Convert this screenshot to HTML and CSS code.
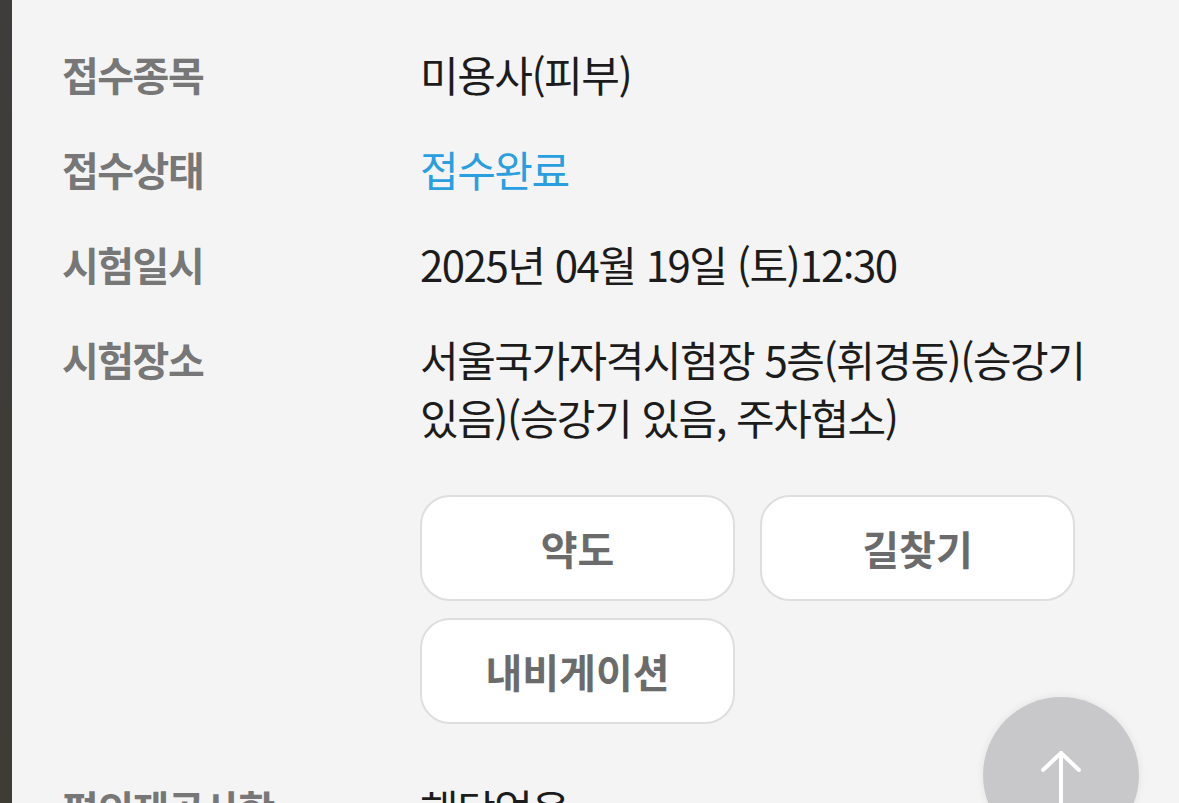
FILE: index.html
```html
<!DOCTYPE html>
<html lang="ko">
<head>
    <meta charset="UTF-8">
    <meta name="viewport" content="width=device-width, initial-scale=1.0">
    <title>접수 상세</title>
    <link rel="stylesheet" href="styles.css">
</head>
<body>
    <div class="edge"></div>

    <main class="panel">
        <dl class="info">
            <div class="row">
                <dt>접수종목</dt>
                <dd>미용사(피부)</dd>
            </div>
            <div class="row">
                <dt>접수상태</dt>
                <dd class="status">접수완료</dd>
            </div>
            <div class="row">
                <dt>시험일시</dt>
                <dd>2025년 04월 19일 (토)12:30</dd>
            </div>
            <div class="row">
                <dt>시험장소</dt>
                <dd>
                    <p class="address">서울국가자격시험장 5층(휘경동)(승강기 있음)(승강기 있음, 주차협소)</p>
                    <div class="map-buttons">
                        <button type="button">약도</button>
                        <button type="button">길찾기</button>
                        <button type="button">내비게이션</button>
                    </div>
                </dd>
            </div>
            <div class="row">
                <dt>편의제공사항</dt>
                <dd>해당없음</dd>
            </div>
        </dl>
    </main>

    <button class="to-top" type="button" aria-label="맨 위로">
        <svg width="44" height="60" viewBox="0 0 44 60" fill="none" stroke="#fff" stroke-width="4" stroke-linecap="round" stroke-linejoin="round">
            <path d="M22 4 V58"/>
            <path d="M4 21 L22 4 L40 21"/>
        </svg>
    </button>
</body>
</html>
```

FILE: styles.css
```css
body {
    margin: 0;
    display: flex;
    min-height: 100vh;
    background: #3c3c3c;
    font-family: "Noto Sans CJK KR", "Noto Sans", sans-serif;
    overflow: hidden;
}

.edge {
    width: 12px;
    flex-shrink: 0;
    background: linear-gradient(180deg, #3e3d3b, #3f3b35);
}

.panel {
    flex: 1;
    background: #f4f4f4;
    padding: 45px 40px 0 50px;
}

.info {
    margin: 0;
    display: flex;
    flex-direction: column;
    gap: 37px;
}

.row {
    display: grid;
    grid-template-columns: 358px 1fr;
    line-height: 58px;
}

dt {
    color: #777777;
    font-size: 40px;
    font-weight: 700;
    letter-spacing: -1.5px;
}

dd {
    margin: 0;
    color: #1c1c1c;
    font-size: 42px;
    letter-spacing: -1.5px;
    word-break: keep-all;
}

.status {
    color: #2a9fe0;
}

.address {
    margin: 0;
}

.map-buttons {
    display: grid;
    grid-template-columns: 315px 315px;
    column-gap: 25px;
    row-gap: 17px;
    margin: 49px 0 18px;
}

.map-buttons button {
    height: 106px;
    background: #ffffff;
    border: 2px solid #dedede;
    border-radius: 30px;
    font-family: inherit;
    font-size: 40px;
    font-weight: 700;
    color: #6b6b6b;
    padding: 0;
}

.to-top {
    position: fixed;
    right: 40px;
    bottom: -50px;
    width: 156px;
    height: 156px;
    border-radius: 50%;
    border: none;
    background: #c8c8ca;
    box-shadow: 0 0 8px rgba(0, 0, 0, 0.08);
    display: flex;
    justify-content: center;
    align-items: flex-start;
    padding: 52px 0 0;
}
```
